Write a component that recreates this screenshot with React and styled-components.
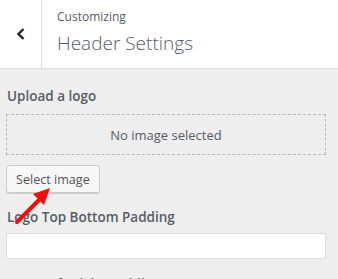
import styled, { createGlobalStyle } from "styled-components";

const Global = createGlobalStyle`
  body {
    margin: 0;
    background: #eeeeee;
    font-family: "Open Sans", "Noto Sans", sans-serif;
  }
`;

const Panel = styled.div`
  width: 338px;
  height: 279px;
  overflow: hidden;
  background: #eeeeee;
  position: relative;
`;

const Header = styled.div`
  display: flex;
  height: 68px;
  background: #fff;
  border-bottom: 1px solid #dddddd;
`;

const BackButton = styled.div`
  width: 41px;
  border-right: 1px solid #dddddd;
  display: flex;
  align-items: center;
  justify-content: center;
  color: #23282d;
`;

const Titles = styled.div`
  padding: 8px 0 0 15px;
  display: flex;
  flex-direction: column;
`;

const Crumb = styled.span`
  font-size: 12px;
  line-height: 18px;
  color: #555d66;
`;

const Title = styled.h1`
  margin: 4px 0 0;
  font-size: 19px;
  font-weight: 300;
  line-height: 26px;
  color: #555d66;
`;

const Body = styled.div`
  padding: 17px 12px 0 6px;
  display: flex;
  flex-direction: column;
`;

const Label = styled.label`
  font-size: 13.5px;
  font-weight: 600;
  color: #555d66;
  line-height: 20px;
  padding-left: 1px;
  margin-bottom: ${(p) => p.gap || 8}px;
`;

const Placeholder = styled.div`
  height: 39px;
  border: 1px dashed #b4b9be;
  display: flex;
  align-items: center;
  justify-content: center;
  font-size: 13px;
  color: #555d66;
`;

const Button = styled.button`
  align-self: flex-start;
  margin: 10px 0 14px;
  height: 28px;
  padding: 0 9px;
  background: #f7f7f7;
  border: 1px solid #cccccc;
  border-radius: 3px;
  box-shadow: 0 1px 0 #cccccc;
  font-family: inherit;
  font-size: 12.6px;
  color: #555555;
`;

const Input = styled.div`
  height: 24px;
  background: #fff;
  border: 1px solid #dddddd;
  margin-bottom: 15px;
`;

const Arrow = styled.svg`
  position: absolute;
  left: 12px;
  top: 182px;
`;

export default function App() {
  return (
    <Panel>
      <Global />
      <Header>
        <BackButton>
          <svg width="10" height="14" viewBox="0 0 10 14">
            <path d="M7.5 2 L2.5 7 L7.5 12" fill="none" stroke="#23282d" strokeWidth="2.4" />
          </svg>
        </BackButton>
        <Titles>
          <Crumb>Customizing</Crumb>
          <Title>Header Settings</Title>
        </Titles>
      </Header>
      <Body>
        <Label>Upload a logo</Label>
        <Placeholder>No image selected</Placeholder>
        <Button>Select image</Button>
        <Label gap={6}>Logo Top Bottom Padding</Label>
        <Input />
        <Label>Logo Left Right Padding</Label>
      </Body>
      <Arrow width="46" height="46" viewBox="0 0 46 46">
        <line x1="5" y1="40" x2="29" y2="16" stroke="#f20d0d" strokeWidth="4" strokeLinecap="round" />
        <polygon points="38,6 21,12 32,23" fill="#f20d0d" />
      </Arrow>
    </Panel>
  );
}
